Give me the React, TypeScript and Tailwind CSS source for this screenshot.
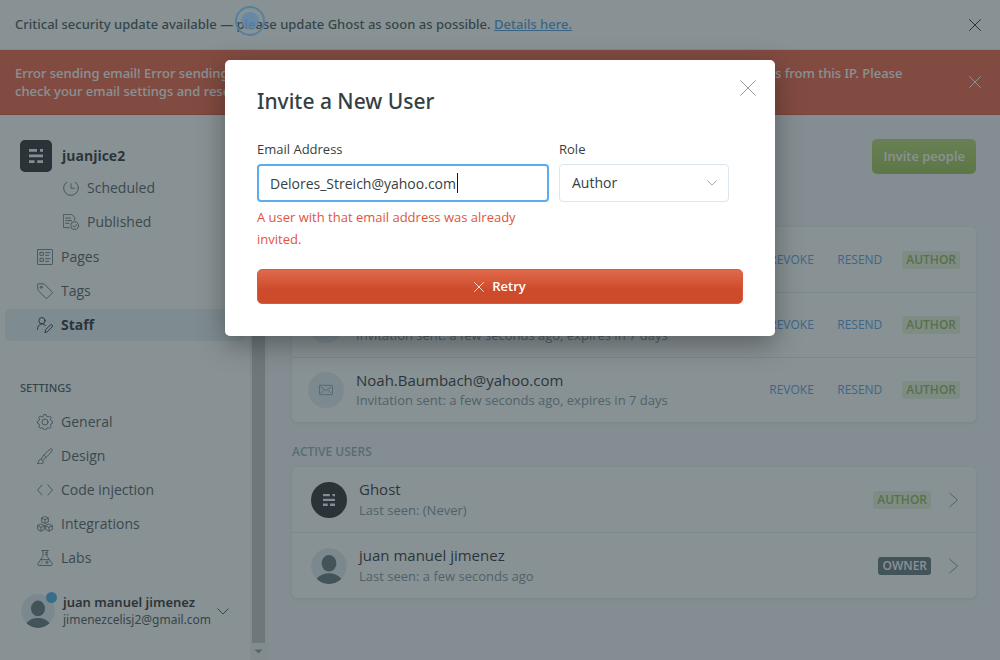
import React, { useState } from "react";

type IconProps = { className?: string };

function Svg({ className = "size-4", children }: { className?: string; children: React.ReactNode }) {
  return (
    <svg
      viewBox="0 0 24 24"
      fill="none"
      stroke="currentColor"
      strokeWidth="1.4"
      strokeLinecap="round"
      strokeLinejoin="round"
      aria-hidden="true"
      className={`shrink-0 ${className}`}
    >
      {children}
    </svg>
  );
}

const ClockIcon = () => (
  <Svg>
    <circle cx="12" cy="12" r="11" />
    <path d="M12 5.5v7h5" />
  </Svg>
);

const PublishedIcon = () => (
  <Svg>
    <path d="M9.5 20.5h-8a1 1 0 0 1-1-1v-18a1 1 0 0 1 1-1h11.500l4.500 4.500v4M4 6h7M4 10h9M4 14h5" />
    <circle cx="17.500" cy="17.500" r="6" />
    <path d="M20.200 15.800l-3 4-2-1.800" />
  </Svg>
);

const PagesIcon = () => (
  <Svg>
    <rect x="0.700" y="0.700" width="22.600" height="22.600" rx="1" />
    <rect x="5" y="5" width="4.500" height="4.500" />
    <rect x="5" y="14" width="4.500" height="4.500" />
    <path d="M13 5.500h6.500M13 9.500h4.500M13 14.500h6.500M13 18.500h4.500" />
  </Svg>
);

const TagIcon = () => (
  <Svg>
    <path d="M1 1.800A1 1 0 0 1 1.800 1l8.200.3a2 2 0 0 1 1.300.6L22.800 13.400a1.300 1.300 0 0 1 0 1.900l-7.500 7.500a1.300 1.300 0 0 1-1.900 0L1.900 11.300A2 2 0 0 1 1.300 10z" />
    <circle cx="6.300" cy="6.300" r="1.600" />
  </Svg>
);

const StaffIcon = () => (
  <Svg>
    <circle cx="7.500" cy="5.500" r="4.700" />
    <path d="M.7 18.500c0-4.700 3-8.200 6.800-8.200 2.200 0 4 1 5.200 2.700M12 23l.9-4 7-7a1.900 1.900 0 0 1 2.800 2.800l-7 7z" />
  </Svg>
);

const GearIcon = () => (
  <Svg>
    <circle cx="12" cy="12" r="4.500" />
    <path d="M9.600 3.300 10.500.8h3l.9 2.500 2.400 1 2.400-1.200 2.100 2.100-1.200 2.400 1 2.400 2.200.9v3l-2.200.9-1 2.400 1.200 2.400-2.100 2.100-2.400-1.200-2.400 1-.9 2.500h-3l-.9-2.500-2.400-1-2.400 1.200-2.100-2.100 1.200-2.400-1-2.400-2.200-.9v-3l2.200-.9 1-2.400-1.200-2.400 2.100-2.100 2.400 1.200z" />
  </Svg>
);

const BrushIcon = () => (
  <Svg>
    <path d="M.8 23c2.200-1 1-3.200 2.500-5.300a4 4 0 0 1 5.700 5C7 24.200 3.300 23.400.8 23zM6.500 16.200C9 11.500 14.500 5.500 20 1.500c1.700-1.200 3.700.7 2.500 2.500-4 5.500-8.500 10.500-13.200 14M10.500 11l3.500 3.200" />
  </Svg>
);

const CodeIcon = () => (
  <Svg>
    <path d="M7.500 4.500.8 12l6.700 7.500M16.500 4.500l6.700 7.500-6.700 7.500" />
  </Svg>
);

const IntegrationsIcon = () => (
  <Svg>
    <path d="M12 .8l5 2.400v5.600l-5 2.500-5-2.500V3.200zM7 3.200l5 2.500 5-2.500M12 5.700v5.600" />
    <path d="M6 12.200l5 2.400v5.600l-5 2.500-5-2.500v-5.600zM1 14.600l5 2.500 5-2.500M6 17.100v5.600" />
    <path d="M18 12.200l5 2.400v5.600l-5 2.500-5-2.500v-5.600zM13 14.600l5 2.500 5-2.500M18 17.100v5.600" />
  </Svg>
);

const LabsIcon = () => (
  <Svg>
    <path d="M7 .8h10M9 .8v8.700L1.300 20.600A1.700 1.700 0 0 0 2.700 23.200h18.600a1.700 1.700 0 0 0 1.400-2.600L15 9.500V.8M5.500 14.500h13M12.500 4H15M12.500 7H15M15 16.500v4M13 18.500h4M8 17.500v.1M6.500 20v.1" />
  </Svg>
);

const MailIcon = () => (
  <Svg className="size-[14px]">
    <rect x="0.800" y="4" width="22.400" height="16" rx="1" />
    <path d="M3.500 7l8.500 6 8.500-6M3.500 17l4-3.500M20.500 17l-4-3.500" />
  </Svg>
);

function CrossIcon({ className = "size-3" }: IconProps) {
  return (
    <svg viewBox="0 0 12 12" fill="none" stroke="currentColor" aria-hidden="true" className={`shrink-0 ${className}`}>
      <path d="M.3.3l11.400 11.400M11.700.3L.3 11.700" vectorEffect="non-scaling-stroke" />
    </svg>
  );
}

function ChevronDown({ className = "h-[7px] w-3" }: IconProps) {
  return (
    <svg viewBox="0 0 12 7" fill="none" stroke="currentColor" aria-hidden="true" className={`shrink-0 ${className}`}>
      <path d="M.5.5L6 6 11.500.5" vectorEffect="non-scaling-stroke" />
    </svg>
  );
}

function GhostMark({ className = "size-4" }: IconProps) {
  return (
    <svg viewBox="0 0 14 14" fill="#f4f8fb" aria-hidden="true" className={className}>
      <path d="M0 0h8v2.700H0zM11 0h3v2.700h-3zM0 5.600h14v2.700H0zM0 11.200h5.500v2.700H0zM8.200 11.200H14v2.700H8.200z" />
    </svg>
  );
}

function Avatar({ className = "size-9" }: IconProps) {
  return (
    <svg viewBox="0 0 36 36" aria-hidden="true" className={`shrink-0 rounded-full ${className}`}>
      <circle cx="18" cy="18" r="18" fill="#dfe9ee" />
      <ellipse cx="18" cy="15.300" rx="7.400" ry="8.300" fill="#54666d" />
      <path d="M5.500 31c3-3.800 7.200-5.700 12.500-5.700S27.500 27.200 30.500 31A18 18 0 0 1 18 36 18 18 0 0 1 5.500 31z" fill="#54666d" />
    </svg>
  );
}

function NavItem({ icon, label, active = false, nested = false }: { icon: React.ReactNode; label: string; active?: boolean; nested?: boolean }) {
  return (
    <li>
      <a
        href="#"
        className={`mx-[5px] flex h-8 items-center gap-2 rounded-md leading-4 ${nested ? "pl-[58px]" : "pl-8"} ${
          active ? "bg-[#e5eff5] font-bold text-[#15171a]" : "text-[#54666d]"
        }`}
      >
        {icon}
        <span className={active ? "" : "text-[#3e4b51]"}>{label}</span>
      </a>
    </li>
  );
}

function Badge({ role }: { role: "Author" | "Owner" }) {
  return (
    <span
      className={`rounded-[3px] px-1 text-xs leading-[18px] font-semibold uppercase ${
        role === "Owner" ? "bg-[#54666d] text-white" : "bg-[#e9f3d8] text-[#86ad45]"
      }`}
    >
      {role}
    </span>
  );
}

function InvitedUser({ email }: { email: string }) {
  return (
    <li className="flex h-[65px] items-center border-t border-[#dfe9ee] px-4 first:border-t-0">
      <span className="flex size-9 items-center justify-center rounded-full bg-[#e1edf3] text-[#738a94]">
        <MailIcon />
      </span>
      <div className="ml-3 min-w-0 flex-1">
        <h3 className="text-[15px] leading-5 text-[#15171a]">{email}</h3>
        <p className="text-[13px] leading-5 text-[#738a94]">Invitation sent: a few seconds ago, expires in 7 days</p>
      </div>
      <div className="flex items-center text-xs">
        <button type="button" className="w-[68px] text-left text-[#4794e0]">REVOKE</button>
        <button type="button" className="w-[65px] text-left text-[#4794e0]">RESEND</button>
        <Badge role="Author" />
      </div>
    </li>
  );
}

function ActiveUser({ name, seen, role, image }: { name: string; seen: string; role: "Author" | "Owner"; image: React.ReactNode }) {
  return (
    <li className="border-t border-[#dfe9ee] first:border-t-0">
      <a href="#" className="flex h-[65px] items-center pr-[18px] pl-[19px]">
        {image}
        <div className="ml-3 min-w-0 flex-1">
          <h3 className="text-[15px] leading-5 text-[#15171a]">{name}</h3>
          <p className="text-[13px] leading-[22px] text-[#738a94]">{seen}</p>
        </div>
        <Badge role={role} />
        <svg viewBox="0 0 9 16" fill="none" stroke="#738a94" aria-hidden="true" className="ml-[18px] h-4 w-[9px]">
          <path d="M.5 1l8 7-8 7" />
        </svg>
      </a>
    </li>
  );
}

function InviteModal() {
  const [email, setEmail] = useState("Delores_Streich@yahoo.com");
  return (
    <section
      role="dialog"
      aria-modal="true"
      aria-labelledby="invite-title"
      className="relative w-[550px] max-w-full rounded-[5px] bg-white px-8 pt-[26px] pb-8 shadow-[0_8px_28px_rgba(0,0,0,0.35)]"
    >
      <button type="button" aria-label="Close" className="absolute top-5 right-[19px] text-[#9aa4a9]">
        <CrossIcon className="size-4" />
      </button>
      <h1 id="invite-title" className="font-['Noto_Sans',sans-serif] text-[21px] leading-[30px] font-medium text-[#343f44]">Invite a New User</h1>
      <form onSubmit={(e) => e.preventDefault()}>
        <div className="mt-[23px] flex gap-[10px]">
          <div className="w-[292px]">
            <label htmlFor="email" className="block text-[13px] leading-5 text-[#343f44]">Email Address</label>
            <div className="relative mt-[5px]">
              <input
                id="email"
                type="email"
                value={email}
                onChange={(e) => setEmail(e.target.value)}
                aria-describedby="email-error"
                className="h-[38px] w-full rounded-[4px] border-2 border-[#5badf0] bg-white px-[11px] text-sm text-[#343f44] outline-none"
              />
              <span className="absolute top-[9px] left-[200px] h-5 w-px bg-[#15171a]" />
            </div>
            <p id="email-error" className="mt-1 text-[13px] leading-[22px] text-[#e25440]">
              A user with that email address was already invited.
            </p>
          </div>
          <div className="w-[170px]">
            <label htmlFor="role" className="block text-[13px] leading-5 text-[#343f44]">Role</label>
            <div className="relative mt-[5px]">
              <select
                id="role"
                defaultValue="Author"
                className="h-[38px] w-full appearance-none rounded-[4px] border border-[#dae6ed] bg-white px-3 text-sm text-[#343f44] outline-none"
              >
                <option>Author</option>
                <option>Editor</option>
                <option>Administrator</option>
              </select>
              <span className="pointer-events-none absolute top-4 right-3 text-[#9aabb5]">
                <ChevronDown className="h-[6px] w-[10px]" />
              </span>
            </div>
          </div>
        </div>
        <button
          type="submit"
          className="mt-[19px] flex h-[35px] w-full items-center justify-center gap-2 rounded-[5px] border border-[#d9593a] bg-linear-to-b from-[#e06a4c] to-[#cd4a2b] to-60% text-[13px] font-semibold text-white"
        >
          <CrossIcon className="size-[10px] opacity-80" />
          Retry
        </button>
      </form>
    </section>
  );
}

export default function App() {
  return (
    <div className="relative flex min-h-screen flex-col bg-[#f4f8fb] font-['Open_Sans','Noto_Sans',sans-serif] text-sm text-[#343f44]">
      <aside className="flex items-center justify-between border-b border-[#dfe9ee] bg-white px-[15px] py-[14px] font-['Noto_Sans',sans-serif] text-[13px] leading-[21px] font-medium">
        <p>
          Critical security update available — please update Ghost as soon as possible.{" "}
          <a href="#" className="text-[#3d8fd8] underline">Details here.</a>
        </p>
        <button type="button" aria-label="Dismiss" className="mr-1 text-[#15171a]"><CrossIcon /></button>
      </aside>
      <aside className="flex items-center justify-between border-b border-[#d63c1c] bg-[#f05230] px-[15px] py-[14px] font-['Noto_Sans',sans-serif] text-[13px] leading-[18px] font-medium text-white">
        <p className="max-w-[900px]">
          Error sending email! Error sending email: failed to send the email message. Reason: 550 too many recent SMTP connections from this IP. Please
          check your email settings and resend the invitation.
        </p>
        <button type="button" aria-label="Dismiss" className="mr-1"><CrossIcon /></button>
      </aside>

      <div className="flex flex-1">
        <nav className="flex w-[250px] shrink-0 flex-col bg-white">
          <header className="flex h-[67px] items-start gap-[10px] pt-[25px] pl-5">
            <span className="flex size-8 items-center justify-center rounded-[5px] bg-[#15171a]">
              <GhostMark className="size-[14px]" />
            </span>
            <span className="text-sm leading-8 font-bold text-[#15171a]">juanjice2</span>
          </header>
          <div className="flex-1 overflow-hidden">
            <ul className="-mt-[10px] flex flex-col gap-[2px]">
              <NavItem nested icon={<ClockIcon />} label="Scheduled" />
              <NavItem nested icon={<PublishedIcon />} label="Published" />
            </ul>
            <ul className="mt-[3px] flex flex-col gap-[2px]">
              <NavItem icon={<PagesIcon />} label="Pages" />
              <NavItem icon={<TagIcon />} label="Tags" />
              <NavItem active icon={<StaffIcon />} label="Staff" />
            </ul>
            <h2 className="mt-[39px] pl-5 font-['Noto_Sans',sans-serif] text-[11px] leading-4 font-medium text-[#343f44]">SETTINGS</h2>
            <ul className="mt-[10px] flex flex-col gap-[2px]">
              <NavItem icon={<GearIcon />} label="General" />
              <NavItem icon={<BrushIcon />} label="Design" />
              <NavItem icon={<CodeIcon />} label="Code injection" />
              <NavItem icon={<IntegrationsIcon />} label="Integrations" />
              <NavItem icon={<LabsIcon />} label="Labs" />
            </ul>
          </div>
          <footer className="flex items-center pb-8 pl-[21px]">
            <span className="relative">
              <Avatar className="size-[34px]" />
              <span className="absolute -top-[2px] -right-[2px] size-[11px] rounded-full bg-[#3ba3e6]" />
            </span>
            <div className="ml-2 font-['Noto_Sans',sans-serif] text-[13px] leading-[17px]">
              <p className="font-semibold text-[#15171a]">juan manuel jimenez</p>
              <p className="text-xs leading-[17px]">jimenezcelisj2@gmail.com</p>
            </div>
            <span className="ml-[6px]"><ChevronDown /></span>
          </footer>
        </nav>

        <div aria-hidden="true" className="flex w-[18px] shrink-0 flex-col items-start bg-[#f1f1f1] pl-[2px]">
          <span className="w-[13px] flex-1 bg-[#bdc1c4]" />
          <svg viewBox="0 0 13 17" className="h-[17px] w-[13px]"><path d="M2.500 6.500h8l-4 4z" fill="#8a8f92" /></svg>
        </div>

        <main className="min-w-0 flex-1 pr-6 pl-6">
          <header className="flex items-start justify-between pt-6">
            <h1 className="text-2xl leading-[35px] font-semibold">Staff users</h1>
            <button
              type="button"
              className="h-[35px] rounded-[5px] bg-linear-to-b from-[#b0d65e] to-[#95bb40] px-[11px] text-[13px] font-semibold text-white"
            >
              Invite people
            </button>
          </header>
          <h2 className="mt-[29px] text-xs leading-4 font-semibold text-[#8aa0ab]">INVITED USERS</h2>
          <ul className="mt-2 rounded-[5px] bg-white shadow-[0_1px_4px_rgba(0,0,0,0.12)]">
            <InvitedUser email="Delores_Streich@yahoo.com" />
            <InvitedUser email="Marcus.Hintz@yahoo.com" />
            <InvitedUser email="Noah.Baumbach@yahoo.com" />
          </ul>
          <h2 className="mt-[22px] text-xs leading-4 font-semibold text-[#8aa0ab]">ACTIVE USERS</h2>
          <ul className="mt-[7px] rounded-[5px] bg-white shadow-[0_1px_4px_rgba(0,0,0,0.12)]">
            <ActiveUser
              name="Ghost"
              seen="Last seen: (Never)"
              role="Author"
              image={
                <span className="flex size-9 items-center justify-center rounded-full bg-[#15171a]">
                  <GhostMark className="size-3" />
                </span>
              }
            />
            <ActiveUser name="juan manuel jimenez" seen="Last seen: a few seconds ago" role="Owner" image={<Avatar />} />
          </ul>
        </main>
      </div>

      <div className="absolute inset-0 flex items-start justify-center bg-[#39474d]/60 pt-[60px]">
        <span aria-hidden="true" className="absolute top-[6px] left-[235px] flex size-[30px] items-center justify-center rounded-full border-2 border-[#5680a0]">
          <span className="size-[18px] rounded-full bg-[#5c87ab]/80" />
        </span>
        <InviteModal />
      </div>
    </div>
  );
}
